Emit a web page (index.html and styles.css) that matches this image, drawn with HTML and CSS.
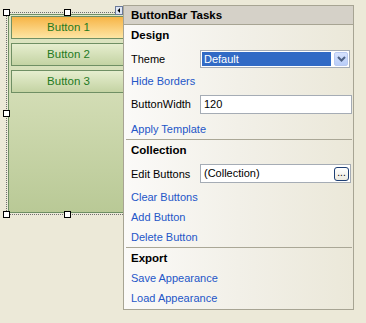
FILE: index.html
```html
<!DOCTYPE html>
<html>
<head>
<meta charset="utf-8">
<link rel="stylesheet" href="styles.css">
</head>
<body>
<div class="surface">
  <div class="selection">
    <div class="control">
      <div class="bar-btn active">Button 1</div>
      <div class="bar-btn">Button 2</div>
      <div class="bar-btn">Button 3</div>
    </div>
    <span class="handle h-tl"></span>
    <span class="handle h-tm"></span>
    <span class="handle h-ml"></span>
    <span class="handle h-bl"></span>
    <span class="handle h-bm"></span>
  </div>
  <svg class="smarttag" width="8" height="9" viewBox="0 0 8 9">
    <rect x="0.5" y="0.5" width="7" height="8" fill="#dfe6f5" stroke="#6b7a99"/>
    <path d="M5 2 L5 7 L2.5 4.5 Z" fill="#000"/>
  </svg>

  <div class="tasks">
    <div class="tasks-head">ButtonBar Tasks</div>
    <div class="tasks-body">
      <div class="row h20 title">Design</div>
      <div class="row h27">
        <span class="label">Theme</span>
        <div class="combo">
          <span class="combo-sel">Default</span>
          <span class="combo-btn">
            <svg width="9" height="6" viewBox="0 0 9 6"><path d="M1 1 L4.5 4.5 L8 1" fill="none" stroke="#4d6185" stroke-width="2"/></svg>
          </span>
        </div>
      </div>
      <div class="row h18 link">Hide Borders</div>
      <div class="row h28">
        <span class="label">ButtonWidth</span>
        <div class="textbox">120</div>
      </div>
      <div class="row h21 link">Apply Template</div>
      <div class="sep"></div>
      <div class="row h20 title">Collection</div>
      <div class="row h27">
        <span class="label">Edit Buttons</span>
        <div class="textbox coll">(Collection)<span class="ellipsis">...</span></div>
      </div>
      <div class="row h20 link">Clear Buttons</div>
      <div class="row h20 link">Add Button</div>
      <div class="row h20 link">Delete Button</div>
      <div class="sep"></div>
      <div class="row h20 title">Export</div>
      <div class="row h20 link">Save Appearance</div>
      <div class="row h20 link">Load Appearance</div>
    </div>
  </div>
</div>
</body>
</html>
```
FILE: styles.css
```css
* { box-sizing: border-box; }
html, body { margin: 0; padding: 0; }
body {
  width: 366px;
  height: 323px;
  overflow: hidden;
  background: #ece9d8;
  font-family: "Liberation Sans", Arial, sans-serif;
  font-size: 11px;
}
.surface {
  position: relative;
  width: 366px;
  height: 323px;
}
.selection {
  position: absolute;
  left: 6px;
  top: 12px;
  width: 123px;
  height: 203px;
  border: 1px dotted #6e6e6e;
  padding: 1px;
}
.control {
  height: 199px;
  border: 1px solid #6f8f64;
  background: linear-gradient(to bottom, #dfe6c4 0%, #d7e0ba 30%, #b9c996 100%);
  padding: 1px 0 0 2px;
  display: flex;
  flex-direction: column;
  gap: 4px;
}
.bar-btn {
  height: 23px;
  flex: none;
  border: 1px solid #6f8f64;
  background: linear-gradient(to bottom, #e6eecf 0%, #c4d3a3 100%);
  color: #1f7a1f;
  text-align: center;
  line-height: 21px;
  font-size: 11.5px;
}
.bar-btn.active {
  background: linear-gradient(to bottom, #f6b446 0%, #fbd27f 60%, #fde6a4 100%);
}
.handle {
  position: absolute;
  width: 7px;
  height: 7px;
  background: #fff;
  border: 1px solid #000;
}
.h-tl { left: -4px; top: -4px; }
.h-tm { left: 57px; top: -4px; }
.h-ml { left: -4px; top: 97px; }
.h-bl { left: -4px; top: 198px; }
.h-bm { left: 57px; top: 198px; }
.smarttag {
  position: absolute;
  left: 115px;
  top: 6px;
}
.tasks {
  position: absolute;
  left: 123px;
  top: 5px;
  width: 231px;
  height: 305px;
  border: 1px solid #a7a493;
  background: linear-gradient(to right, #fbfaf8 0%, #f2f0e8 50%, #ebe8d9 100%);
}
.tasks-head {
  height: 19px;
  background: #d5d1c8;
  border-bottom: 1px solid #a7a493;
  font-weight: bold;
  font-size: 11.5px;
  padding-left: 7px;
  line-height: 18px;
  color: #000;
}
.tasks-body {
  padding: 0 1px 0 2px;
}
.row {
  display: flex;
  align-items: center;
  padding-left: 5px;
  color: #000;
}
.h18 { height: 18px; }
.h20 { height: 20px; }
.h21 { height: 21px; }
.h27 { height: 27px; }
.h28 { height: 28px; }
.title { font-weight: bold; font-size: 11.5px; }
.link { color: #2456c8; }
.label { width: 69px; flex: none; }
.sep {
  height: 1px;
  background: #aaa796;
}
.combo {
  width: 150px;
  height: 18px;
  border: 1px solid #a5acb5;
  background: #fff;
  padding: 1px;
  display: flex;
  align-items: center;
  gap: 3px;
}
.combo-sel {
  flex: 1;
  height: 14px;
  background: #316ac5;
  color: #fff;
  line-height: 14px;
  padding-left: 2px;
}
.combo-btn {
  width: 14px;
  height: 14px;
  background: linear-gradient(to bottom, #d6e2fd, #b9cdf8);
  border: 1px solid #b8c9f2;
  border-radius: 2px;
  display: flex;
  align-items: center;
  justify-content: center;
}
.textbox {
  width: 152px;
  height: 19px;
  border: 1px solid #a5acb5;
  background: #fff;
  padding-left: 3px;
  line-height: 17px;
  display: flex;
  align-items: center;
}
.textbox.coll {
  width: 151px;
  justify-content: space-between;
  padding-right: 1px;
}
.ellipsis {
  width: 15px;
  height: 14px;
  border: 1px solid #1e3f74;
  border-radius: 3px;
  background: linear-gradient(to bottom, #ffffff, #eceae0);
  font-size: 10px;
  line-height: 10px;
  text-align: center;
  color: #000;
}
```
